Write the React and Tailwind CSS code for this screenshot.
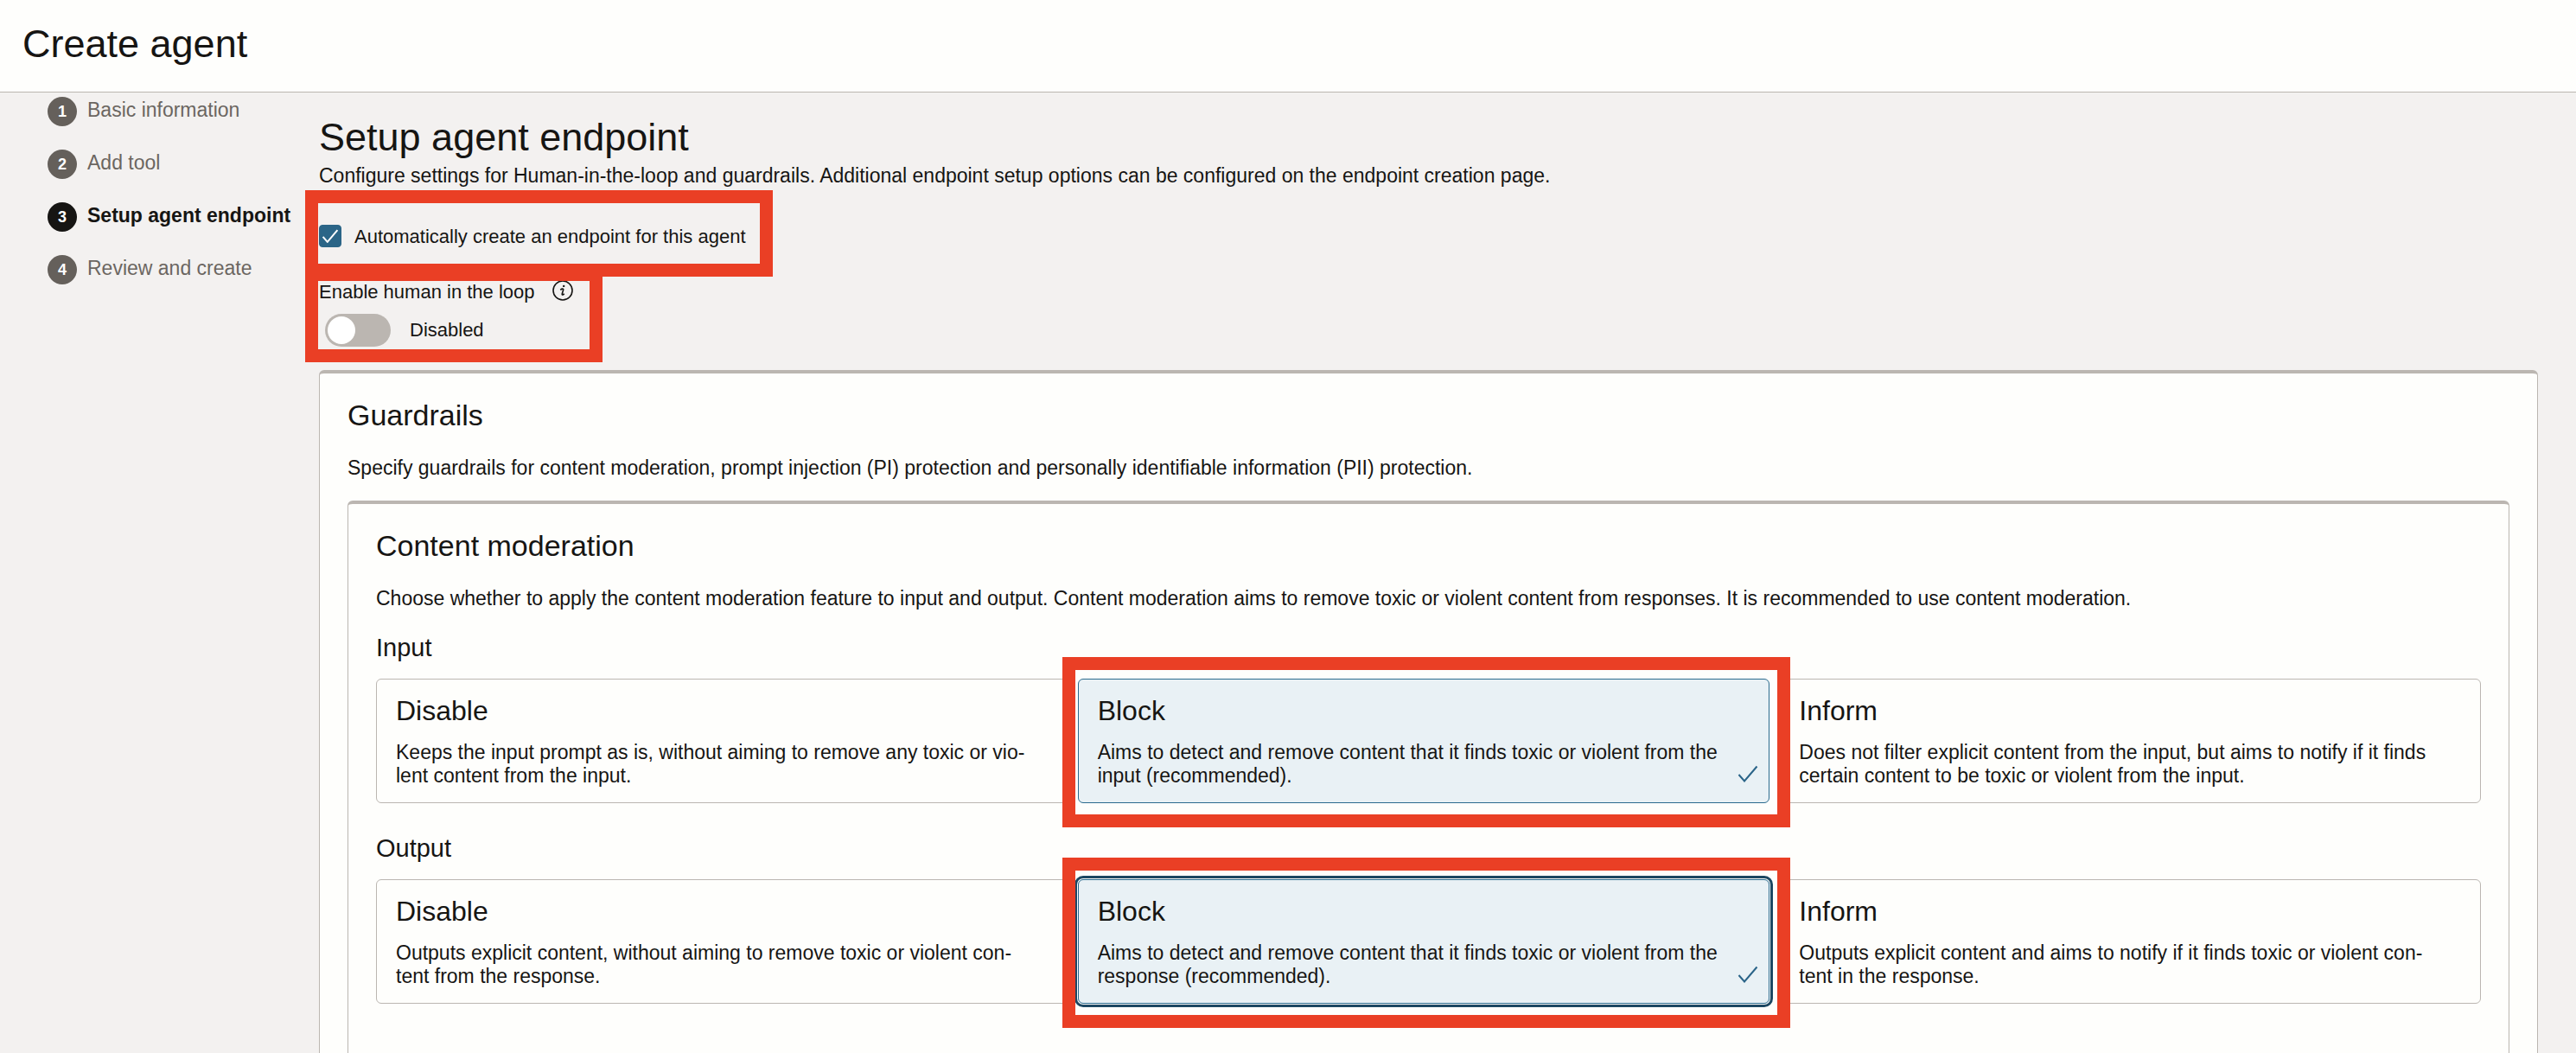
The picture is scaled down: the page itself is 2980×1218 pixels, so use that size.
import { useState } from "react";

const steps = ["Basic information", "Add tool", "Setup agent endpoint", "Review and create"];

const inputOptions = [
  { id: "disable", title: "Disable", text: "Keeps the input prompt as is, without aiming to remove any toxic or vio\u00adlent content from the input." },
  { id: "block", title: "Block", text: "Aims to detect and remove content that it finds toxic or violent from the input (recommended)." },
  { id: "inform", title: "Inform", text: "Does not filter explicit content from the input, but aims to notify if it finds certain content to be toxic or violent from the input." },
];

const outputOptions = [
  { id: "disable", title: "Disable", text: "Outputs explicit content, without aiming to remove toxic or violent con\u00adtent from the response." },
  { id: "block", title: "Block", text: "Aims to detect and remove content that it finds toxic or violent from the response (recommended)." },
  { id: "inform", title: "Inform", text: "Outputs explicit content and aims to notify if it finds toxic or violent con\u00adtent in the response." },
];

function Highlight({ className }) {
  return <div aria-hidden="true" className={`pointer-events-none absolute z-10 border-15 border-[#ea3f25] ${className}`} />;
}

function Check({ className, strokeWidth }) {
  return (
    <svg viewBox="0 0 24 20" fill="none" stroke="currentColor" strokeWidth={strokeWidth} aria-hidden="true" className={className}>
      <path d="M1.5 11 8 18.5 22.5 1.5" />
    </svg>
  );
}

function InfoIcon() {
  return (
    <svg viewBox="0 0 24 24" fill="none" stroke="currentColor" strokeWidth="1.6" aria-hidden="true" className="size-6">
      <circle cx="12" cy="12" r="11" />
      <path d="M9.3 11.3c1-.9 2-1.3 2.7-1.2.8.1.8.9.5 1.7l-1.2 3.9c-.3 1 .1 1.5.8 1.3.6-.2 1.1-.6 1.6-1.2" />
      <circle cx="13.2" cy="6.9" r="1.2" fill="currentColor" stroke="none" />
    </svg>
  );
}

function OptionGroup({ name, label, options, focused }) {
  const [value, setValue] = useState("block");
  return (
    <fieldset>
      <legend className="text-[29px] leading-[34px]">{label}</legend>
      <div className="mt-[19px] grid grid-cols-3">
        {options.map((o) => {
          const on = value === o.id;
          const ring = focused && on ? "outline-3 outline-offset-1 outline-[#1c4762]" : "";
          return (
            <div key={o.id} className={`relative flex ${o.id === "inform" ? "" : "mr-[11px]"}`}>
              <label
                className={`relative flex h-36 flex-1 flex-col rounded-md border pt-4 pr-12 pl-[22px] ${on ? "border-[#2a6a8e] bg-[#e9f1f5]" : "border-[#bbb6b1]"} ${ring}`}
              >
                <input type="radio" name={name} value={o.id} checked={on} onChange={() => setValue(o.id)} className="sr-only" />
                <span className="text-[32px] leading-10">{o.title}</span>
                <span className="mt-[15px] text-[23px] leading-[27px]">{o.text}</span>
                {on && <Check strokeWidth="2" className="absolute right-3 bottom-[23px] h-5 w-6 text-[#2a6488]" />}
              </label>
              {o.id === "block" && <Highlight className="-top-[25px] -right-6 -bottom-7 -left-[18px]" />}
            </div>
          );
        })}
      </div>
    </fieldset>
  );
}

export default function App() {
  const [auto, setAuto] = useState(true);
  const [loop, setLoop] = useState(false);
  return (
    <div className="flex h-screen flex-col overflow-hidden bg-[#f3f1f0] font-['Liberation_Sans',Arial,sans-serif] text-[23px] leading-7 text-[#161513]">
      <header className="shrink-0 border-b border-[#bbb6b1] bg-[#fefefc] px-[26px] pt-[25px] pb-[29px]">
        <h1 className="text-[45px] leading-[52px]">Create agent</h1>
      </header>
      <div className="flex min-h-0 flex-1">
        <nav aria-label="Steps" className="w-[369px] shrink-0 pt-[5px] pl-[55px]">
          <ol className="flex flex-col gap-[27px]">
            {steps.map((s, i) => (
              <li key={s}>
                <a href="#" aria-current={i === 2 ? "step" : undefined} className={`flex items-start leading-[30px] whitespace-nowrap ${i === 2 ? "font-bold" : "text-[#6b6661]"}`}>
                  <span className={`mr-3 flex size-[34px] items-center justify-center rounded-full text-lg font-bold text-white ${i === 2 ? "bg-[#161513]" : "bg-[#65605b]"}`}>{i + 1}</span>
                  {s}
                </a>
              </li>
            ))}
          </ol>
        </nav>
        <main className="min-w-0 flex-1 pt-[26px] pr-11">
          <h2 className="text-[45px] leading-[52px]">Setup agent endpoint</h2>
          <p className="mt-1">Configure settings for Human-in-the-loop and guardrails. Additional endpoint setup options can be configured on the endpoint creation page.</p>

          <div className="relative mt-[43px] w-fit text-[22px]">
            <label className="flex items-start gap-[15px]">
              <span className="relative flex size-[26px] items-center justify-center">
                <input type="checkbox" checked={auto} onChange={(e) => setAuto(e.target.checked)} className="absolute inset-0 appearance-none rounded border border-[#2b6587] checked:bg-[#2b6587]" />
                {auto && <Check strokeWidth="2.5" className="relative h-4 w-5 text-white" />}
              </span>
              Automatically create an endpoint for this agent
            </label>
            <Highlight className="-top-10 -right-[31px] -bottom-8 -left-4" />
          </div>

          <div className="relative mt-9 w-fit text-[22px]">
            <div className="flex items-start gap-5">
              <label htmlFor="loop">Enable human in the loop</label>
              <button type="button" aria-label="About human in the loop"><InfoIcon /></button>
            </div>
            <div className="mt-[11px] ml-[7px] flex items-center gap-[22px]">
              <button id="loop" type="button" role="switch" aria-checked={loop} onClick={() => setLoop(!loop)} className={`flex h-[38px] w-[76px] items-center rounded-full px-[3px] ${loop ? "justify-end bg-[#2b6587]" : "bg-[#bbb6b1]"}`}>
                <span className="size-8 rounded-full bg-white" />
              </button>
              <span>{loop ? "Enabled" : "Disabled"}</span>
            </div>
            <Highlight className="-top-3.5 -right-[34px] -bottom-[18px] -left-4" />
          </div>

          <section className="mt-[27px] h-[1000px] rounded-md border border-t-4 border-[#bbb6b1] bg-[#fefefc] px-8 pt-7">
            <h3 className="text-[34px] leading-10">Guardrails</h3>
            <p className="mt-[27px]">Specify guardrails for content moderation, prompt injection (PI) protection and personally identifiable information (PII) protection.</p>
            <section className="mt-6 h-[1000px] rounded-md border border-t-4 border-[#bbb6b1] px-8 pt-7">
              <h4 className="text-[34px] leading-10">Content moderation</h4>
              <p className="mt-[27px] mb-[26px]">Choose whether to apply the content moderation feature to input and output. Content moderation aims to remove toxic or violent content from responses. It is recommended to use content moderation.</p>
              <div className="flex flex-col gap-[35px]">
                <OptionGroup name="input" label="Input" options={inputOptions} />
                <OptionGroup name="output" label="Output" options={outputOptions} focused />
              </div>
            </section>
          </section>
        </main>
      </div>
    </div>
  );
}
